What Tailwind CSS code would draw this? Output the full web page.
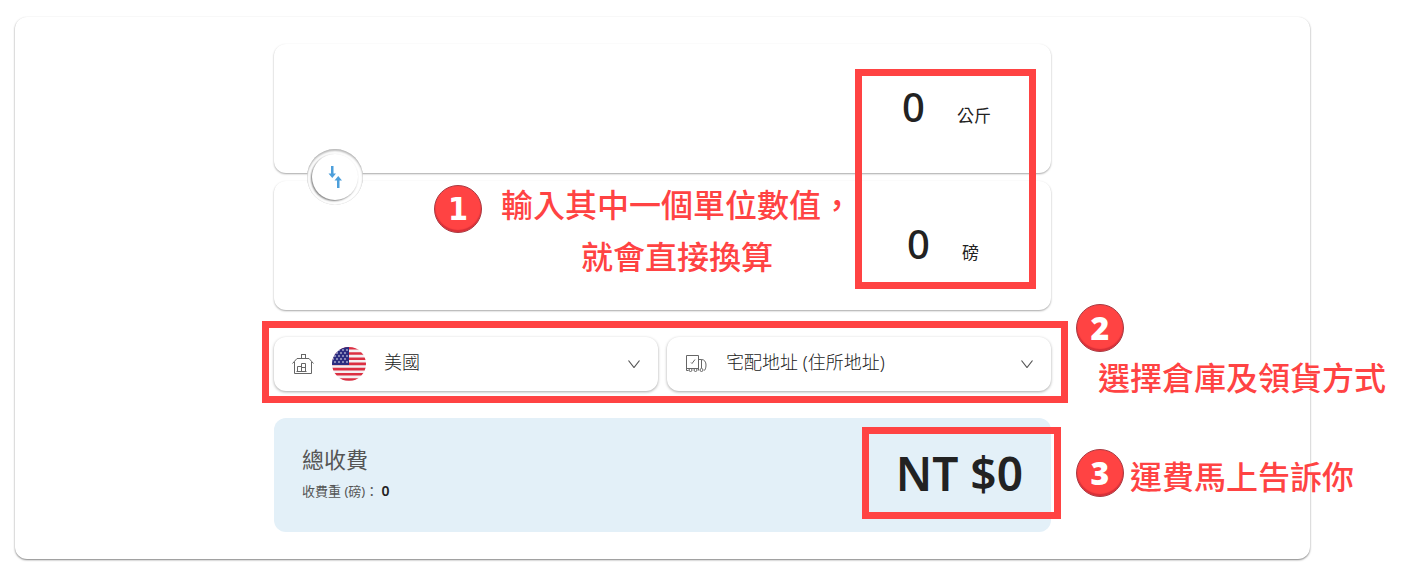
<!DOCTYPE html>
<html lang="zh-Hant">

<head>
    <meta charset="UTF-8">
    <meta name="viewport" content="width=device-width, initial-scale=1.0">
    <script src="https://cdn.jsdelivr.net/npm/@tailwindcss/browser@4"></script>
    <title>運費試算</title>
</head>

<body class="flow-root min-h-screen bg-white font-['Noto_Sans','Noto_Sans_CJK_TC',sans-serif] text-[#222]">

    <main class="mt-[17px] ml-[15px] mr-[93px] py-[27px] rounded-xl bg-white shadow-[0_1px_2px_rgba(0,0,0,0.5)]">
        <form class="w-3/5 mx-auto flex flex-col gap-[27px]" onsubmit="return false">

            <!-- weight converter -->
            <div class="relative flex flex-col gap-2">
                <div class="h-[129px] pr-15 pb-1 flex items-center rounded-xl shadow-[0_1px_2px_rgba(0,0,0,0.35)]">
                    <div class="flex-1 flex items-baseline justify-end gap-8">
                        <input id="kg" type="text" inputmode="decimal" value="0" oninput="convert('kg')"
                            class="w-40 h-12 text-right text-[40px] leading-[48px] font-medium outline-none">
                        <label for="kg" class="text-[17px]">公斤</label>
                    </div>
                </div>
                <div class="h-[129px] pr-18 pb-1 flex items-center rounded-xl shadow-[0_1px_2px_rgba(0,0,0,0.35)]">
                    <div class="flex-1 flex items-baseline justify-end gap-8">
                        <input id="lb" type="text" inputmode="decimal" value="0" oninput="convert('lb')"
                            class="w-40 h-12 text-right text-[40px] leading-[48px] font-medium outline-none">
                        <label for="lb" class="text-[17px]">磅</label>
                    </div>
                </div>

                <button type="button" aria-label="交換單位"
                    class="absolute left-[33px] top-[105px] size-14 rounded-full bg-white flex items-center justify-center shadow-[inset_0_2px_2px_rgba(0,0,0,0.25),inset_0_0_1px_rgba(0,0,0,0.25)]">
                    <span
                        class="size-[46px] rounded-full bg-white flex items-center justify-center shadow-[-1px_1px_2px_rgba(0,0,0,0.5)]">
                        <svg class="size-6" viewBox="0 0 24 24" fill="#4d9fdb">
                            <path d="M8 1h2.500v7.500H13L9.250 13 5.500 8.500H8z" />
                            <path d="M14 23h2.500v-7.500H19L15.250 11 11.500 15.500H14z" />
                        </svg>
                    </span>
                </button>

                <div class="absolute right-[15px] top-[25px] bottom-[21px] w-[181px] border-[7px] border-[#ff4343] pointer-events-none"></div>
                <div class="absolute left-[160px] top-[135px] flex items-start gap-[19px] text-[#ff4343]">
                    <span
                        class="mt-1.5 size-12 rounded-full bg-[#ff4343] border border-[#a83a42] shadow-[inset_0_-2px_1px_#d82f38] flex items-center justify-center text-white text-[32px] leading-none font-bold font-['DejaVu_Sans_Condensed','DejaVu_Sans',sans-serif]">1</span>
                    <p class="text-center text-[32px] leading-[52px] font-medium whitespace-nowrap">輸入其中一個單位數值，<br>就會直接換算</p>
                </div>
            </div>

            <!-- warehouse and delivery -->
            <div class="relative grid grid-cols-2 gap-[9px]">
                <div class="relative h-[54px] rounded-xl shadow-[0_1px_3px_rgba(0,0,0,0.35)]">
                    <select aria-label="倉庫"
                        class="size-full pl-[110px] pr-10 pb-1 appearance-none text-lg font-light outline-none">
                        <option>美國</option>
                    </select>
                    <div class="absolute inset-y-0 left-[17px] right-[18px] flex items-center pointer-events-none">
                        <svg class="size-6" viewBox="0 0 24 24" fill="none" stroke="#666">
                            <path d="M1.500 11.500 6 6.500h12l4.500 5M3.500 10v11.500h17V10M10.500 6V2.500h4V6M10 2.500h5" />
                            <path d="M6.500 19.500v-5h4v5zM10.500 19.500v-8h4v8zM10.500 15.500h4M5.500 19.500h10" />
                        </svg>
                        <svg class="ml-[17px] size-[34px]" viewBox="0 0 34 34">
                            <clipPath id="round">
                                <circle cx="17" cy="17" r="17" />
                            </clipPath>
                            <g clip-path="url(#round)">
                                <path fill="#f4f0f2" d="M0 0h34v34H0z" />
                                <path stroke="#dc2f42" stroke-width="2.600"
                                    d="M0 1.300h34M0 6.500h34M0 11.700h34M0 16.900h34M0 22.100h34M0 27.300h34M0 32.500h34" />
                                <path fill="#2b2c80" d="M0 0h17v18H0z" />
                                <path stroke="#fff" stroke-width="1.600" stroke-linecap="round" stroke-dasharray="0 4"
                                    d="M3 3h14M1 6h16M3 9h14M1 12h16M3 15h14" />
                            </g>
                        </svg>
                        <svg class="ml-auto w-3 h-2" viewBox="0 0 12 8" fill="none" stroke="#555" stroke-width="1.200">
                            <path d="m.5.5 5.500 7 5.500-7" />
                        </svg>
                    </div>
                </div>
                <div class="relative h-[54px] rounded-xl shadow-[0_1px_3px_rgba(0,0,0,0.35)]">
                    <select aria-label="領貨方式"
                        class="size-full pl-[59px] pr-10 pb-1 appearance-none text-lg font-light outline-none">
                        <option>宅配地址 (住所地址)</option>
                    </select>
                    <div class="absolute inset-y-0 left-[17px] right-[18px] flex items-center pointer-events-none">
                        <svg class="size-6" viewBox="0 0 24 24" fill="none" stroke="#666">
                            <path d="M4.500 18.500h-2v-15h12v15M2.500 16.500h12M14.500 7.500h3c3 0 4.500 2.500 4.500 5.500 0 3-1 5.500-2 5.500" />
                            <path d="M17.500 7.500v8.500M7 10.500l1 1 3-4" />
                            <circle cx="6.500" cy="18" r="1.500" />
                            <circle cx="11.500" cy="18" r="1.500" />
                            <circle cx="17.500" cy="18" r="1.500" />
                        </svg>
                        <svg class="ml-auto w-3 h-2" viewBox="0 0 12 8" fill="none" stroke="#555" stroke-width="1.200">
                            <path d="m.5.5 5.500 7 5.500-7" />
                        </svg>
                    </div>
                </div>

                <div class="absolute -left-3 -right-[17px] -top-4 -bottom-3 border-[7px] border-[#ff4343] pointer-events-none"></div>
                <div class="absolute left-full -top-[33px] ml-[25px] text-[#ff4343]">
                    <span
                        class="size-12 rounded-full bg-[#ff4343] border border-[#a83a42] shadow-[inset_0_-2px_1px_#d82f38] flex items-center justify-center text-white text-[32px] leading-none font-black">2</span>
                    <p class="pl-[22px] text-[32px] leading-[52px] font-medium whitespace-nowrap">選擇倉庫及領貨方式</p>
                </div>
            </div>

            <!-- total -->
            <div class="relative h-[114px] px-7 flex items-center justify-between rounded-xl bg-[#e3f0f8]">
                <div class="text-[#555]">
                    <h2 class="text-[22px] leading-8">總收費</h2>
                    <p class="text-[13px] leading-8">收費重 (磅)： <b id="weight" class="text-sm font-semibold text-[#222]">0</b></p>
                </div>
                <output class="pb-1 text-[46px] leading-none font-semibold">NT $0</output>

                <div class="absolute -right-2.5 top-[9px] bottom-[13px] w-[199px] border-[7px] border-[#ff4343] pointer-events-none"></div>
                <div class="absolute left-full top-[31px] ml-[25px] flex items-start gap-1.5 text-[#ff4343]">
                    <span
                        class="size-12 rounded-full bg-[#ff4343] border border-[#a83a42] shadow-[inset_0_-2px_1px_#d82f38] flex items-center justify-center text-white text-[32px] leading-none font-black">3</span>
                    <p class="pt-1 text-[32px] leading-[48px] font-medium whitespace-nowrap">運費馬上告訴你</p>
                </div>
            </div>
        </form>
    </main>

    <script>
        const LB_PER_KG = 2.20462;

        function convert(from) {
            const kg = document.getElementById("kg");
            const lb = document.getElementById("lb");
            if (from === "kg") {
                lb.value = +((parseFloat(kg.value) || 0) * LB_PER_KG).toFixed(2);
            } else {
                kg.value = +((parseFloat(lb.value) || 0) / LB_PER_KG).toFixed(2);
            }
            document.getElementById("weight").textContent = Math.ceil(parseFloat(lb.value) || 0);
        }
    </script>

</body>

</html>
